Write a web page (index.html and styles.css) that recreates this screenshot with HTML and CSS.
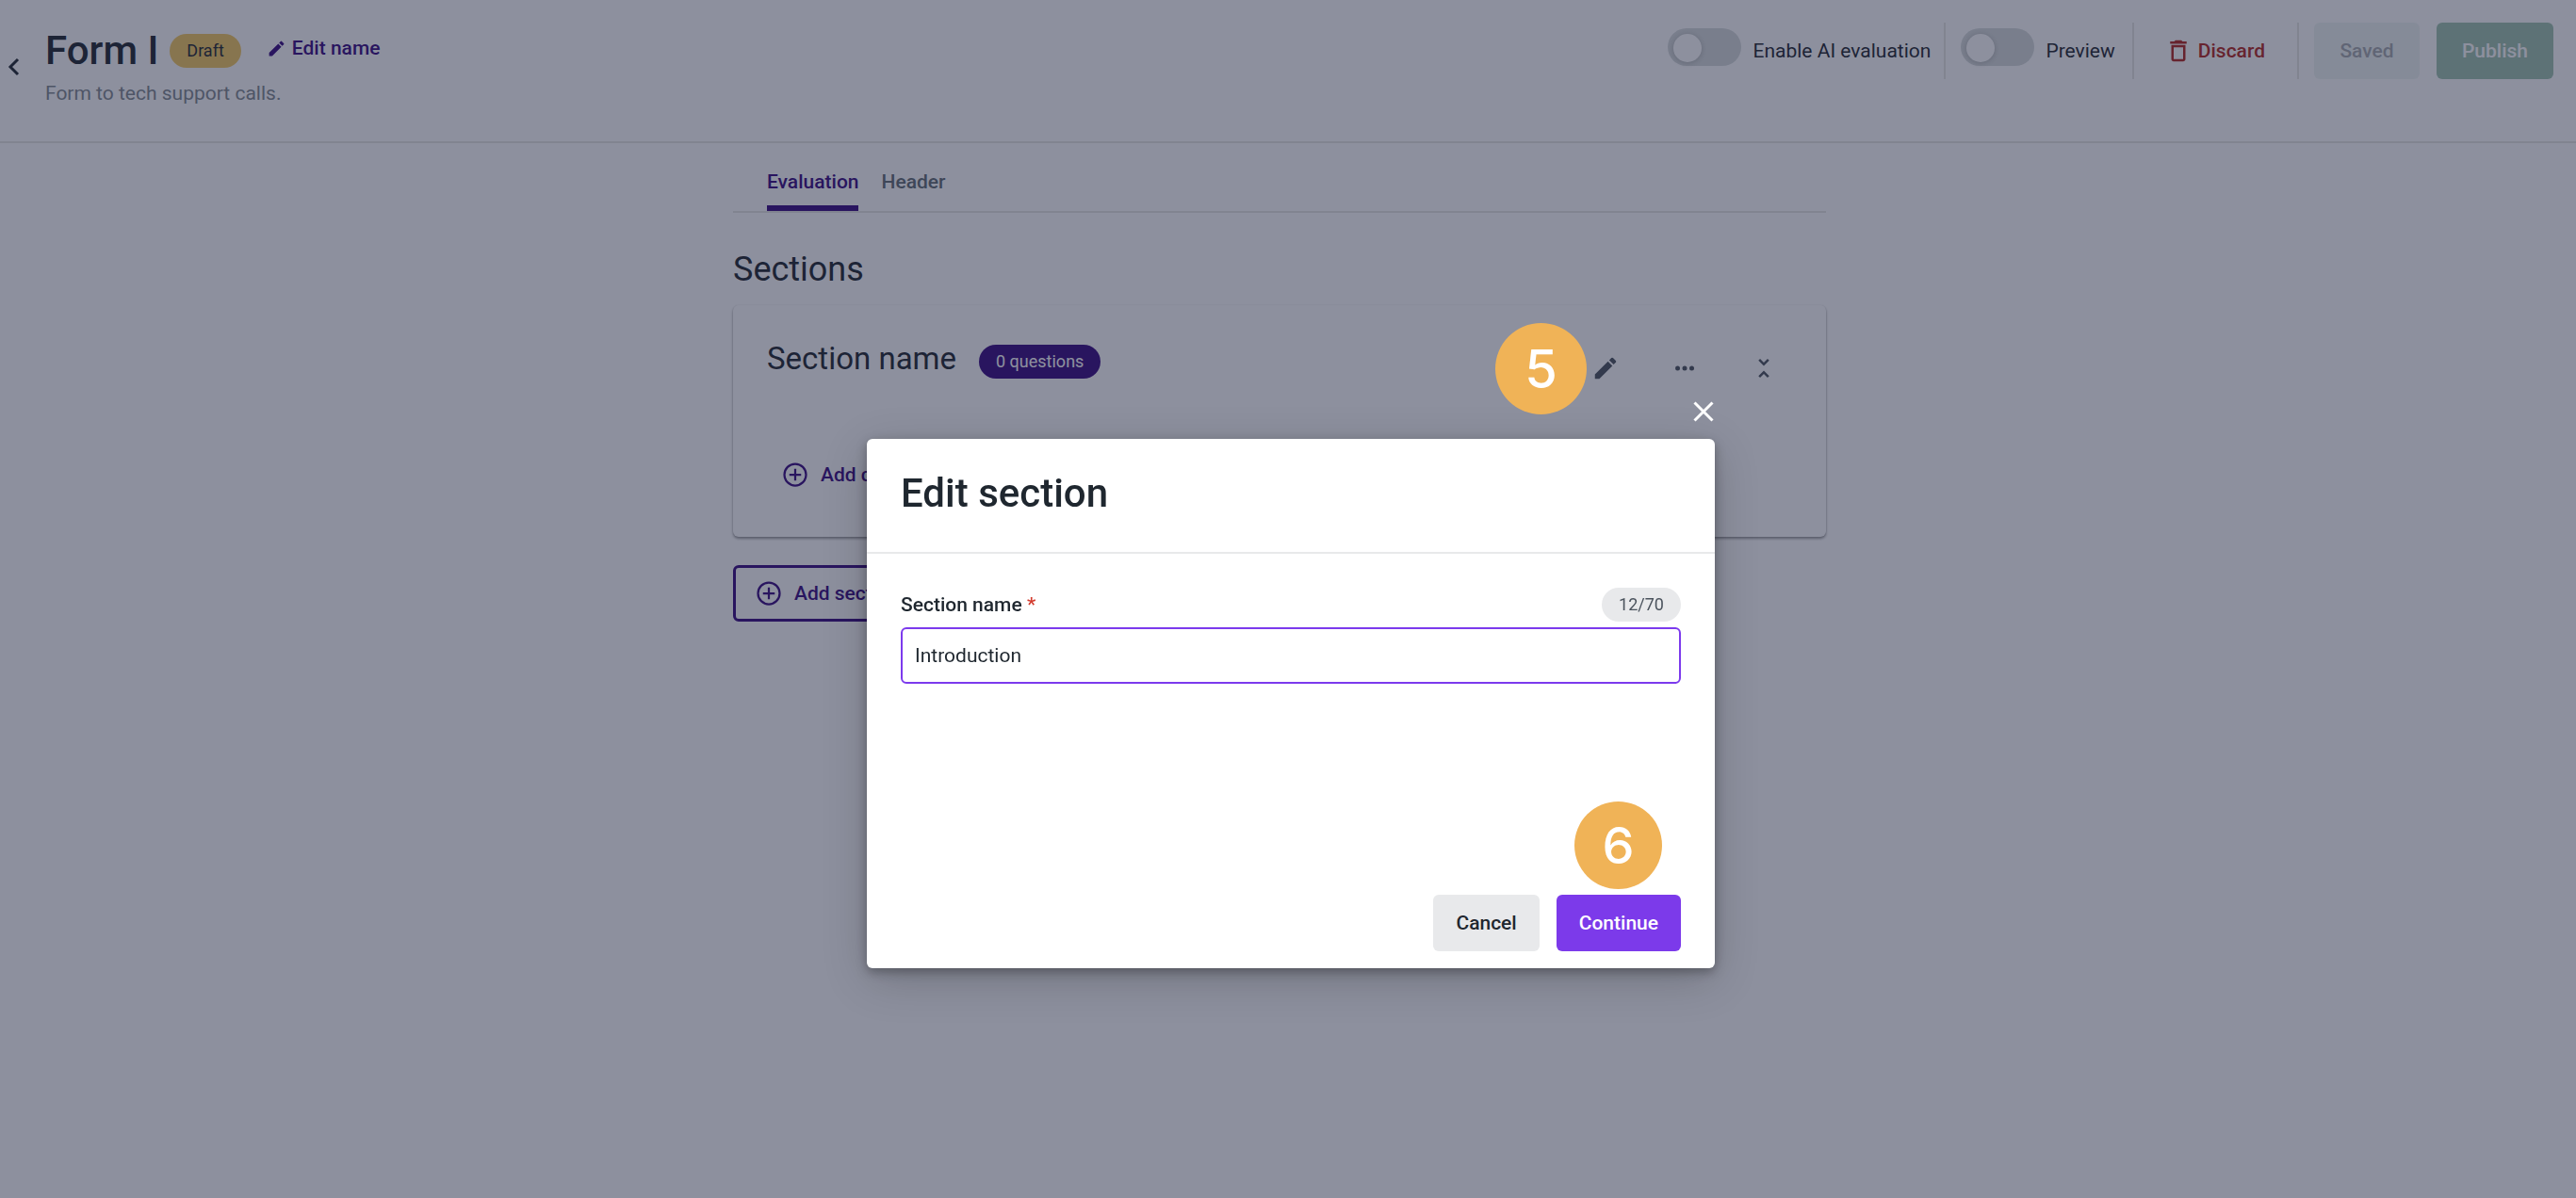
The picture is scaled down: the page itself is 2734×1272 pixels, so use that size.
FILE: index.html
```html
<!DOCTYPE html>
<html lang="en">
<head>
<meta charset="utf-8">
<title>Form I</title>
<link rel="stylesheet" href="styles.css">
</head>
<body>
<header class="topbar">
  <button class="back" type="button" aria-label="Back">
    <svg width="30" height="30" viewBox="0 0 30 30" fill="none" stroke="currentColor" stroke-width="3"><path d="M19 9l-8 8 8 8"/></svg>
  </button>
  <div class="heading">
    <div class="title-row">
      <h1>Form I</h1>
      <span class="badge badge-draft">Draft</span>
      <button class="edit-name" type="button">
        <svg width="21" height="21" viewBox="0 0 24 24" fill="currentColor"><path d="M3 17.25V21h3.75L17.81 9.94l-3.75-3.75L3 17.25zM20.71 7.04a1 1 0 0 0 0-1.41l-2.34-2.34a1 1 0 0 0-1.41 0l-1.83 1.83 3.75 3.75 1.83-1.83z"/></svg>
        Edit name
      </button>
    </div>
    <p class="subtitle">Form to tech support calls.</p>
  </div>
  <div class="actions">
    <label class="toggle"><input type="checkbox"><span>Enable AI evaluation</span></label>
    <label class="toggle toggle-preview"><input type="checkbox"><span>Preview</span></label>
    <button class="discard" type="button">
      <svg width="30" height="30" viewBox="0 0 24 24" fill="currentColor"><path d="M6 19c0 1.100.9 2 2 2h8c1.100 0 2-.9 2-2V7H6v12zM8 9h8v10H8V9zm7.500-5l-1-1h-5l-1 1H5v2h14V4h-3.500z"/></svg>
      Discard
    </button>
    <div class="buttons">
      <button class="btn btn-saved" type="button">Saved</button>
      <button class="btn btn-publish" type="button">Publish</button>
    </div>
  </div>
</header>

<main class="content">
  <nav class="tabs">
    <button class="tab tab-active" type="button">Evaluation</button>
    <button class="tab" type="button">Header</button>
  </nav>
  <h2>Sections</h2>
  <section class="card">
    <div class="card-head">
      <div class="card-title">
        <h3>Section name</h3>
        <span class="badge badge-count">0 questions</span>
      </div>
      <div class="card-tools">
        <span class="marker marker-edit">5</span>
        <button class="tool" type="button" aria-label="Edit section">
          <svg width="30" height="30" viewBox="0 0 24 24" fill="currentColor"><path d="M3 17.250V21h3.750L17.810 9.940l-3.750-3.750L3 17.250zM20.710 7.040a1 1 0 0 0 0-1.410l-2.340-2.340a1 1 0 0 0-1.410 0l-1.830 1.830 3.750 3.750 1.830-1.830z"/></svg>
        </button>
        <button class="tool" type="button" aria-label="More options">
          <svg width="30" height="30" viewBox="0 0 24 24" fill="currentColor"><circle cx="6" cy="12" r="2"/><circle cx="12" cy="12" r="2"/><circle cx="18" cy="12" r="2"/></svg>
        </button>
        <button class="tool" type="button" aria-label="Collapse">
          <svg width="30" height="30" viewBox="0 0 24 24" fill="currentColor"><path d="M7.410 18.590L8.830 20 12 16.830 15.170 20l1.410-1.410L12 14l-4.590 4.590zm9.180-13.180L15.170 4 12 7.170 8.830 4 7.410 5.410 12 10l4.590-4.590z"/></svg>
        </button>
      </div>
    </div>
    <button class="add" type="button">
      <svg width="30" height="30" viewBox="0 0 24 24" fill="none" stroke="currentColor" stroke-width="1.800"><circle cx="12" cy="12" r="9.200"/><path d="M12 7v10M7 12h10"/></svg>
      Add question
    </button>
  </section>
  <button class="add add-outlined" type="button">
    <svg width="30" height="30" viewBox="0 0 24 24" fill="none" stroke="currentColor" stroke-width="1.800"><circle cx="12" cy="12" r="9.200"/><path d="M12 7v10M7 12h10"/></svg>
    Add section
  </button>
</main>

<div class="overlay">
  <form class="modal" role="dialog" aria-labelledby="modal-title">
    <button class="close" type="button" aria-label="Close">
      <svg width="24" height="24" viewBox="0 0 24 24" fill="none" stroke="currentColor" stroke-width="3"><path d="M2.500 2.500l19 19M21.500 2.500l-19 19"/></svg>
    </button>
    <div class="modal-head"><h2 id="modal-title">Edit section</h2></div>
    <div class="modal-body">
      <div class="field-head">
        <label for="section-name">Section name <span class="required">*</span></label>
        <span class="badge badge-limit">12/70</span>
      </div>
      <input class="field" id="section-name" type="text" value="Introduction">
    </div>
    <div class="modal-foot">
      <button class="btn btn-cancel" type="button">Cancel</button>
      <div class="confirm">
        <span class="marker marker-continue">6</span>
        <button class="btn btn-continue" type="submit">Continue</button>
      </div>
    </div>
  </form>
</div>
</body>
</html>
```
FILE: styles.css
```css
:root {
  --ink: #1f272f;
  --purple: #370981;
  --line: #e7e7e3;
}

* {
  box-sizing: border-box;
}

body {
  margin: 0;
  min-height: 100vh;
  background: #fff;
  color: var(--ink);
  font: 400 21px/30px Roboto, "Liberation Sans", sans-serif;
}

h1, h2, h3, p {
  margin: 0;
}

button {
  display: flex;
  align-items: center;
  padding: 0;
  border: 0;
  background: none;
  color: inherit;
  font: inherit;
  font-weight: 500;
  white-space: nowrap;
}

svg {
  display: block;
  flex: none;
}

.topbar {
  display: flex;
  align-items: flex-start;
  padding: 24px 24px 36px 0;
  border-bottom: 2px solid var(--line);
}

.back {
  justify-content: flex-start;
  width: 48px;
  height: 90px;
}

.heading {
  flex: 1;
}

.title-row {
  display: flex;
  align-items: center;
  height: 60px;
}

h1 {
  font-size: 42px;
  font-weight: 500;
  line-height: 60px;
}

.badge {
  flex: none;
  padding: 0 18px;
  border-radius: 18px;
  font-size: 18px;
  line-height: 36px;
}

.badge-draft {
  margin-left: 12px;
  background: #f3c961;
}

.edit-name {
  gap: 6px;
  margin: 0 0 6px 27px;
  color: var(--purple);
}

.subtitle {
  color: #81898f;
}

.actions {
  display: flex;
  height: 60px;
}

.actions > * + * {
  border-left: 2px solid var(--line);
}

.toggle {
  display: flex;
  align-items: center;
  gap: 12px;
  padding: 0 14px 0 16px;
}

.toggle-preview {
  padding-right: 18px;
}

.toggle input {
  appearance: none;
  display: flex;
  width: 78px;
  height: 40px;
  margin: 0 0 8px;
  padding: 6px;
  border-radius: 20px;
  background: #d7dbdb;
}

.toggle input::before {
  content: "";
  width: 30px;
  height: 30px;
  border-radius: 50%;
  background: #fff;
  box-shadow: 0 1px 6px rgba(0, 0, 0, 0.2);
}

.discard {
  gap: 6px;
  padding: 0 34px 0 32px;
  color: #b32721;
}

.buttons {
  display: flex;
  gap: 18px;
  padding-left: 16px;
}

.btn {
  justify-content: center;
  height: 60px;
  min-width: 112px;
  padding: 0 24px;
  border-radius: 6px;
}

.btn-saved {
  background: #eff5f3;
  color: #a5a9ad;
}

.btn-publish {
  min-width: 124px;
  background: #9fc3af;
  color: #fff;
}

.content {
  max-width: 1178px;
  margin: 0 auto;
  padding: 24px 18px 24px 0;
}

.tabs {
  display: flex;
  gap: 24px;
  padding-left: 36px;
  border-bottom: 2px solid var(--line);
}

.tab {
  padding-bottom: 8px;
  border-bottom: 6px solid transparent;
  color: #616b72;
  line-height: 34px;
}

.tab-active {
  border-color: var(--purple);
  color: var(--purple);
}

.content > h2 {
  margin: 36px 0 14px;
  font-size: 36px;
  font-weight: 400;
  line-height: 48px;
}

.card {
  padding: 36px;
  border-radius: 6px;
  background: #fff;
  box-shadow: 0 2px 3px rgba(0, 0, 0, 0.4), 0 0 2px rgba(0, 0, 0, 0.1);
}

.card-head {
  display: flex;
  align-items: flex-start;
  justify-content: space-between;
  margin-bottom: 52px;
}

.card-title {
  display: flex;
  align-items: flex-end;
  gap: 24px;
}

h3 {
  font-size: 33px;
  font-weight: 400;
  line-height: 42px;
}

.badge-count {
  background: var(--purple);
  color: #fff;
}

.card-tools {
  position: relative;
  display: flex;
  gap: 24px;
  color: #4b535d;
}

.tool {
  justify-content: center;
  width: 60px;
  height: 62px;
}

.add {
  gap: 12px;
  height: 60px;
  padding: 0 15px;
  color: var(--purple);
}

.add-outlined {
  margin-top: 30px;
  padding: 0 20px;
  border: 3px solid var(--purple);
  border-radius: 6px;
}

.overlay {
  position: fixed;
  inset: 0;
  z-index: 10;
  display: flex;
  align-items: flex-start;
  justify-content: center;
  padding: 466px 0 24px 6px;
  background: rgba(27, 33, 61, 0.5);
}

.modal {
  position: relative;
  width: 100%;
  max-width: 900px;
  border-radius: 6px;
  background: #fff;
  box-shadow: 0 4px 12px rgba(0, 0, 0, 0.3), 0 12px 48px rgba(0, 0, 0, 0.2);
}

.close {
  position: absolute;
  top: -41px;
  right: 0;
  color: #fff;
}

.modal-head {
  padding: 28px 36px 32px;
  border-bottom: 2px solid #e8e9ea;
}

.modal-head h2 {
  font-size: 42px;
  font-weight: 500;
  line-height: 60px;
}

.modal-body {
  padding: 36px 36px 224px;
}

.field-head {
  display: flex;
  align-items: center;
  justify-content: space-between;
  margin-bottom: 6px;
  font-weight: 500;
}

.required {
  color: #d33c2f;
}

.badge-limit {
  background: #e8e9eb;
  color: #4b535d;
  font-weight: 400;
}

.field {
  display: block;
  width: 100%;
  height: 60px;
  padding: 0 13px;
  border: 2px solid #7c3aed;
  border-radius: 6px;
  background: #fff;
  color: var(--ink);
  font: inherit;
}

.modal-foot {
  display: flex;
  justify-content: flex-end;
  gap: 18px;
  padding: 0 36px 18px;
}

.btn-cancel {
  background: #e8e9eb;
}

.btn-continue {
  min-width: 132px;
  background: #7c3aea;
  color: #fff;
}

.confirm {
  position: relative;
}

/* Numbered step markers, drawn over the interface. */
.marker {
  position: absolute;
  z-index: 20;
  display: flex;
  align-items: center;
  justify-content: center;
  border-radius: 50%;
  background: #f0b357;
  color: #fff;
  font: 500 56px/1 Inter, sans-serif;
}

.marker-edit {
  right: 218px;
  top: -17px;
  width: 97px;
  height: 97px;
}

.marker-continue {
  right: 20px;
  bottom: 66px;
  width: 93px;
  height: 93px;
  font-size: 54px;
}
```
